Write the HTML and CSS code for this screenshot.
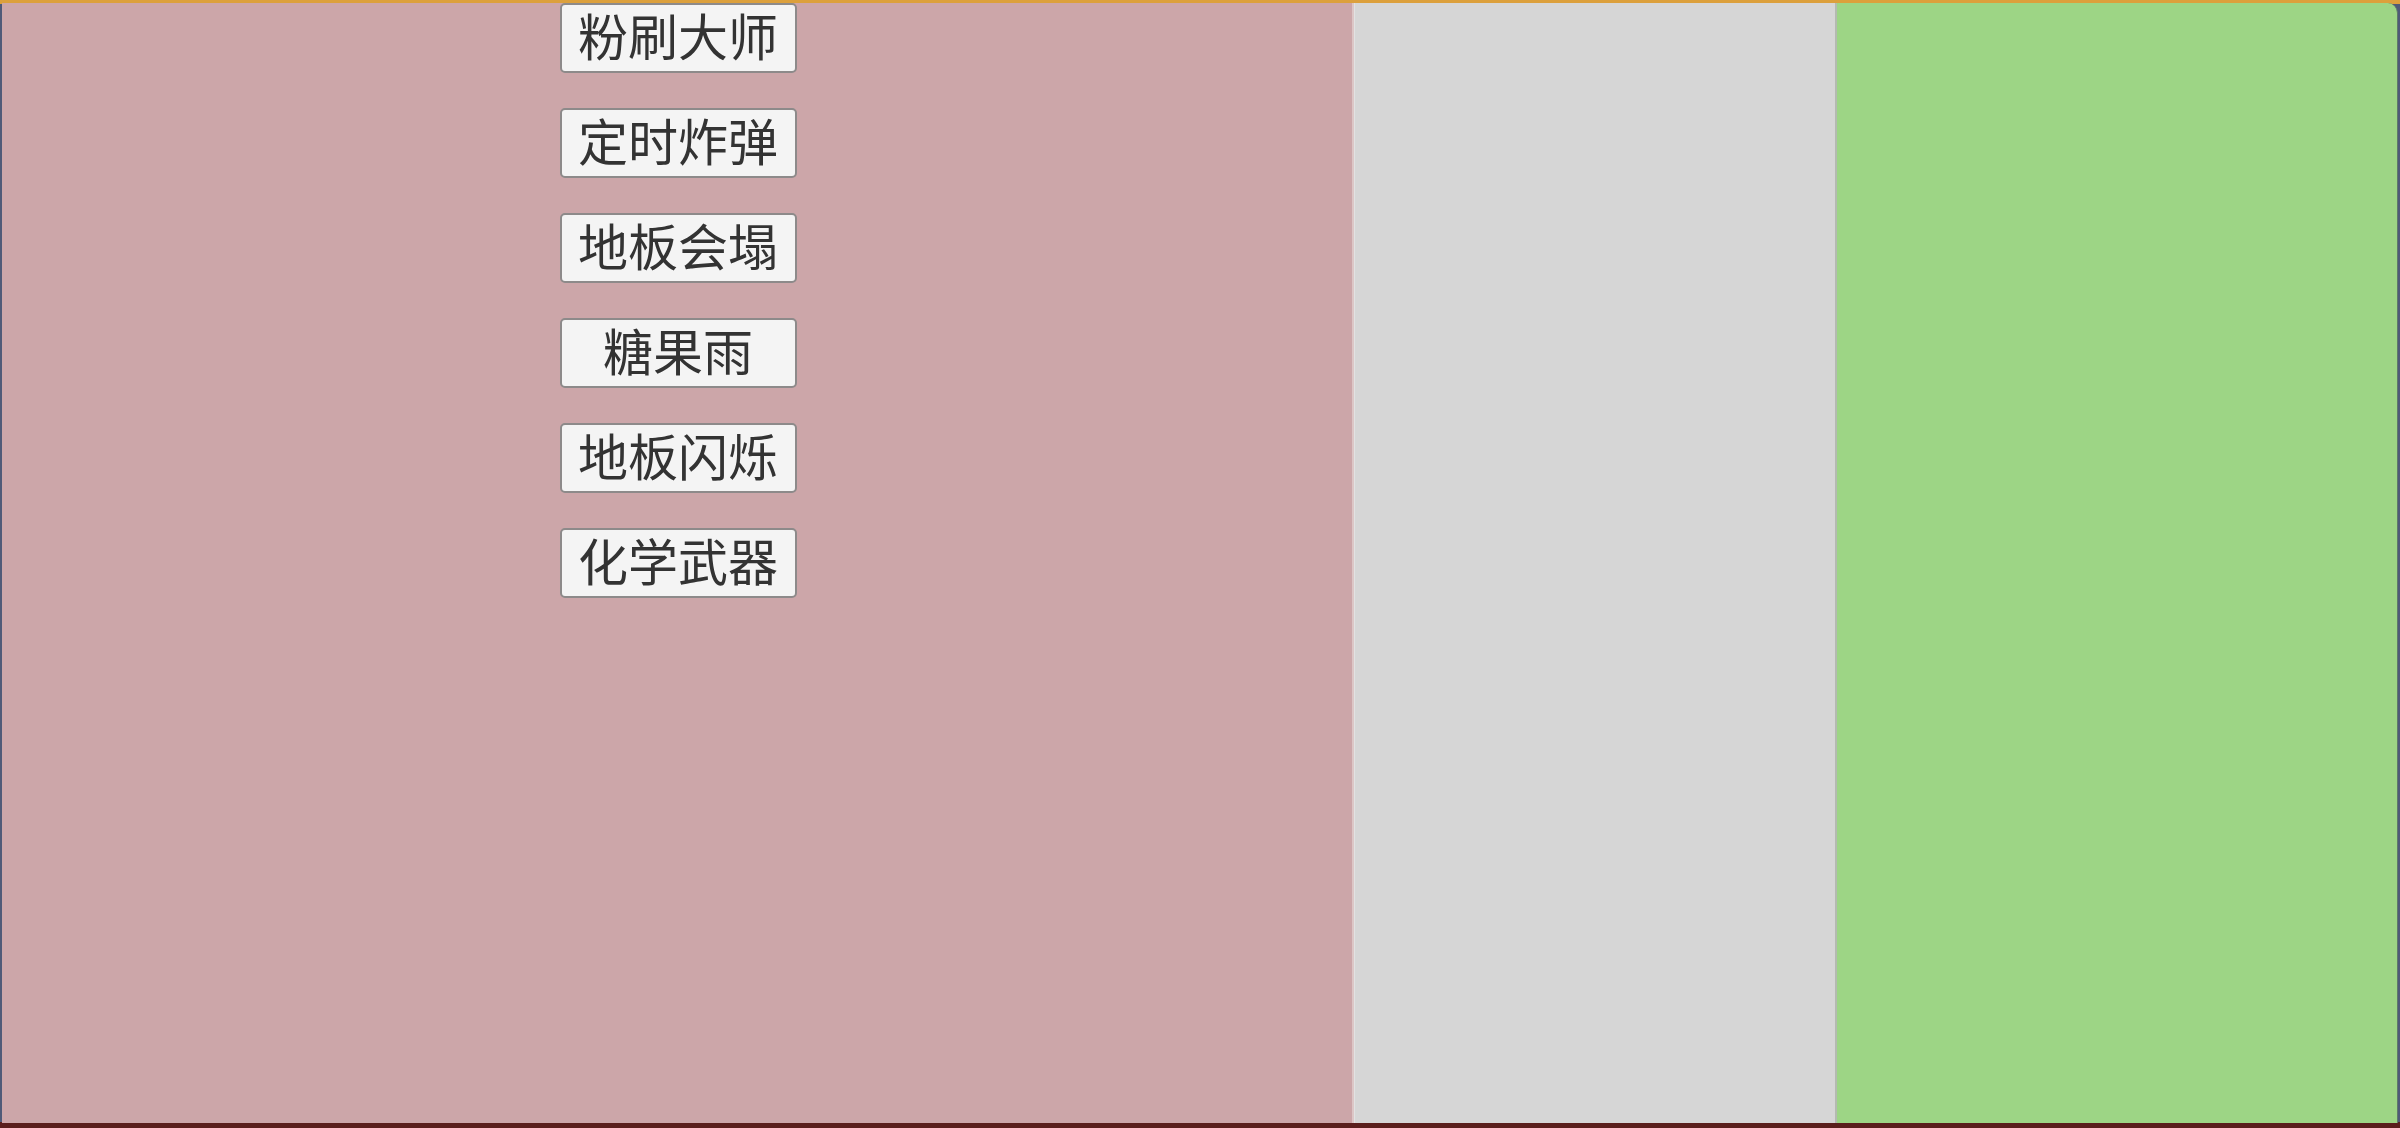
FILE: index.html
```html
<!DOCTYPE html>
<html lang="zh">
<head>
<meta charset="utf-8">
<title>Scene</title>
<link rel="stylesheet" href="styles.css">
</head>
<body>
<div class="frame">
  <div class="panels">
    <div class="panel pink">
      <div class="menu">
        <button class="btn">粉刷大师</button>
        <button class="btn">定时炸弹</button>
        <button class="btn">地板会塌</button>
        <button class="btn">糖果雨</button>
        <button class="btn">地板闪烁</button>
        <button class="btn">化学武器</button>
      </div>
    </div>
    <div class="panel gray"></div>
    <div class="panel green"></div>
  </div>
</div>
</body>
</html>
```
FILE: styles.css
```css
html, body {
  margin: 0;
  padding: 0;
  width: 2400px;
  height: 1128px;
  overflow: hidden;
}
.frame {
  box-sizing: border-box;
  width: 2400px;
  height: 1128px;
  background: linear-gradient(to bottom, #dca03c 0, #dca03c 4px, #4f5a78 4px, #4f5a78 1122px, #5a1e1c 1122px);
  padding: 3px 2px 5px 2px;
}
.panels {
  display: flex;
  height: 100%;
}
.panel {
  box-sizing: border-box;
  height: 100%;
}
.pink {
  width: 1352px;
  background: #cca6a9;
  border-right: 2px solid #dcc6c6;
}
.gray {
  width: 483px;
  background: #d6d6d6;
  border-left: 1px solid #e2e2e2;
  border-right: 2px solid #b4bab0;
}
.green {
  flex: 1;
  background: #9dd585;
  border-top-right-radius: 10px;
  border-right: 1px solid #5f7a6a;
}
.menu {
  display: flex;
  flex-direction: column;
  align-items: center;
  gap: 35px;
  padding-top: 0;
  padding-left: 2px;
}
.btn {
  box-sizing: border-box;
  width: 237px;
  height: 70px;
  padding: 0 0 10px 0;
  margin: 0;
  background: #f4f4f4;
  border: 2px solid #8d8a8a;
  border-radius: 5px;
  color: #333333;
  font-family: "Noto Sans CJK SC", "Noto Sans", sans-serif;
  font-size: 50px;
  line-height: 58px;
  text-align: center;
}
```
